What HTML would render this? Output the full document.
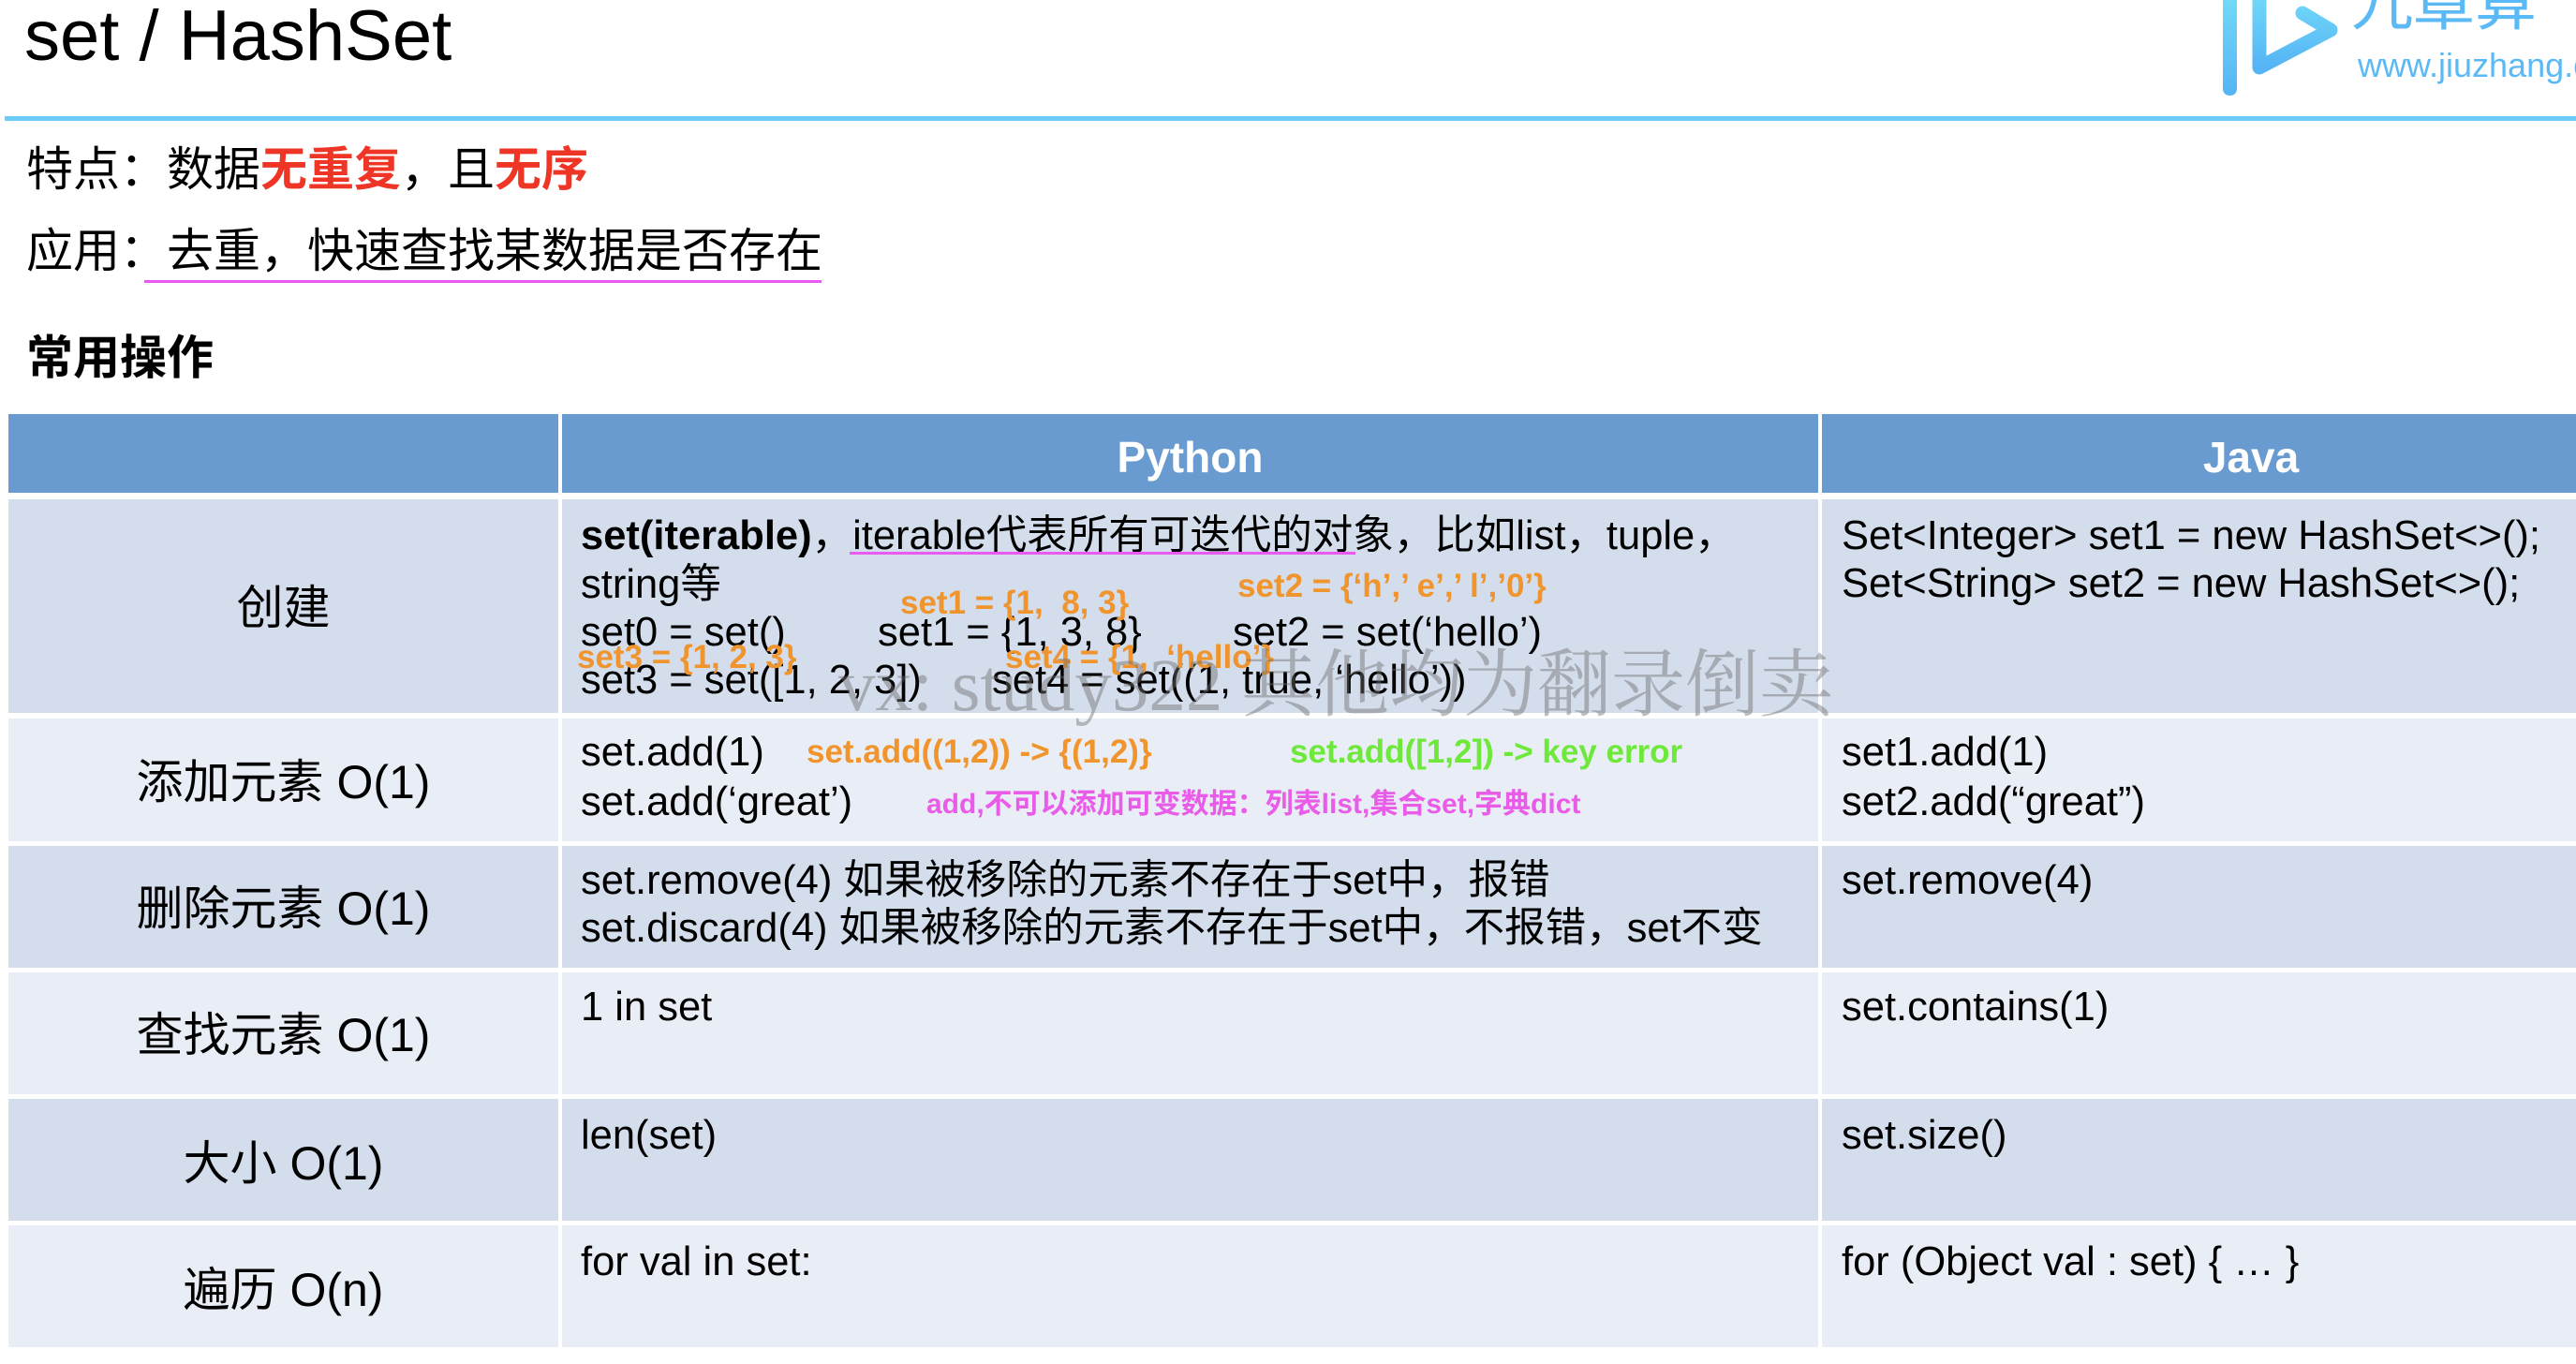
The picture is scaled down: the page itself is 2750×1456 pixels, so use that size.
<!DOCTYPE html>
<html><head><meta charset="utf-8"><style>
*{margin:0;padding:0;box-sizing:border-box}
body{width:2750px;height:1456px;background:#fff;position:relative;overflow:hidden;font-family:"Liberation Sans","Noto Sans CJK SC",sans-serif;color:#000}
.a{position:absolute;white-space:nowrap}
.t{font-size:43.5px;line-height:52px}
.c{position:absolute;}
.lab{font-size:50px;line-height:60px;text-align:center;width:587px;left:9px}
.or{color:#f0952e;font-weight:bold;font-size:35px;line-height:40px}
</style></head><body>
<div class="a" style="left:26px;top:-6px;font-size:76px;line-height:90px">set / HashSet</div>
<!-- logo -->
<svg class="c" style="left:2360px;top:0" width="390" height="110" viewBox="0 0 390 110">
<defs><linearGradient id="g" x1="0" y1="0" x2="0" y2="1"><stop offset="0" stop-color="#74dcf8"/><stop offset="1" stop-color="#55b4f5"/></linearGradient></defs>
<rect x="13" y="-10" width="15" height="112" rx="7" fill="url(#g)"/>
<path d="M52 -10 L52 72 L128 32 L98 14" fill="none" stroke="url(#g)" stroke-width="15" stroke-linejoin="round" stroke-linecap="round"/>
<text x="150" y="26" font-size="66" fill="#5bb9f5" font-family="Noto Sans CJK SC">九章算</text>
<text x="157" y="82" font-size="36" fill="#5bb9f5" font-family="Liberation Sans">www.jiuzhang.com</text>
</svg>
<div class="c" style="left:5px;top:124px;width:2745px;height:5px;background:#6ccbf8"></div>
<div class="a" style="left:28px;top:153px;font-size:50px;line-height:56px">特点：数据<b style="color:#ee3526">无重复</b>，且<b style="color:#ee3526">无序</b></div>
<div class="a" style="left:28px;top:240px;font-size:50px;line-height:56px">应用：去重，快速查找某数据是否存在</div>
<div class="c" style="left:154px;top:299px;width:723px;height:3px;background:#e95bef"></div>
<div class="a" style="left:28px;top:354px;font-size:50px;line-height:56px;font-weight:bold">常用操作</div>
<!-- table -->
<div class="c" style="left:9px;top:442px;width:587px;height:84px;background:#6a9bd0"></div>
<div class="c" style="left:600px;top:442px;width:1341px;height:84px;background:#6a9bd0"></div>
<div class="c" style="left:1945px;top:442px;width:805px;height:84px;background:#6a9bd0"></div>
<div class="a" style="left:600px;width:1341px;text-align:center;top:462px;font-size:46px;line-height:52px;color:#fff;font-weight:bold">Python</div>
<div class="a" style="left:1945px;width:916px;text-align:center;top:462px;font-size:46px;line-height:52px;color:#fff;font-weight:bold">Java</div>
<!-- rows -->
<div class="c" style="left:9px;top:533px;width:587px;height:228px;background:#d3ddec"></div>
<div class="c" style="left:600px;top:533px;width:1341px;height:228px;background:#d3ddec"></div>
<div class="c" style="left:1945px;top:533px;width:805px;height:228px;background:#d3ddec"></div>
<div class="c" style="left:9px;top:767px;width:587px;height:131px;background:#e9eef6"></div>
<div class="c" style="left:600px;top:767px;width:1341px;height:131px;background:#e9eef6"></div>
<div class="c" style="left:1945px;top:767px;width:805px;height:131px;background:#e9eef6"></div>
<div class="c" style="left:9px;top:903px;width:587px;height:130px;background:#d3ddec"></div>
<div class="c" style="left:600px;top:903px;width:1341px;height:130px;background:#d3ddec"></div>
<div class="c" style="left:1945px;top:903px;width:805px;height:130px;background:#d3ddec"></div>
<div class="c" style="left:9px;top:1038px;width:587px;height:130px;background:#e9eef6"></div>
<div class="c" style="left:600px;top:1038px;width:1341px;height:130px;background:#e9eef6"></div>
<div class="c" style="left:1945px;top:1038px;width:805px;height:130px;background:#e9eef6"></div>
<div class="c" style="left:9px;top:1173px;width:587px;height:130px;background:#d3ddec"></div>
<div class="c" style="left:600px;top:1173px;width:1341px;height:130px;background:#d3ddec"></div>
<div class="c" style="left:1945px;top:1173px;width:805px;height:130px;background:#d3ddec"></div>
<div class="c" style="left:9px;top:1308px;width:587px;height:130px;background:#e9eef6"></div>
<div class="c" style="left:600px;top:1308px;width:1341px;height:130px;background:#e9eef6"></div>
<div class="c" style="left:1945px;top:1308px;width:805px;height:130px;background:#e9eef6"></div>
<!-- labels -->
<div class="a lab" style="top:619px">创建</div>
<div class="a lab" style="top:805px">添加元素 O(1)</div>
<div class="a lab" style="top:940px">删除元素 O(1)</div>
<div class="a lab" style="top:1075px">查找元素 O(1)</div>
<div class="a lab" style="top:1212px">大小 O(1)</div>
<div class="a lab" style="top:1347px">遍历 O(n)</div>
<!-- row1 python -->
<div class="a t" style="left:620px;top:546px"><b>set(iterable)</b>，iterable代表所有可迭代的对象，比如list，tuple，</div>
<div class="c" style="left:907px;top:589px;width:540px;height:3px;background:#e95bef"></div>
<div class="a t" style="left:620px;top:598px">string等</div>
<div class="a t" style="left:620px;top:649px">set0 = set()</div>
<div class="a t" style="left:937px;top:649px">set1 = {1, 3, 8}</div>
<div class="a t" style="left:1316px;top:649px">set2 = set(‘hello’)</div>
<div class="a t" style="left:620px;top:700px">set3 = set([1, 2, 3])</div>
<div class="a t" style="left:1059px;top:700px">set4 = set((1, true, ‘hello’))</div>
<div class="a or" style="left:961px;top:624px">set1 = {1,&nbsp; 8, 3}</div>
<div class="a or" style="left:1321px;top:606px">set2 = {‘h’,’ e’,’ l’,’0’}</div>
<div class="a or" style="left:616px;top:682px">set3 = {1, 2, 3}</div>
<div class="a or" style="left:1073px;top:682px">set4 = {1,&nbsp; ‘hello’}</div>
<div class="a" style="left:895px;top:688px;font-size:79px;line-height:90px;font-family:'Liberation Serif','Noto Serif CJK SC',serif;color:rgba(110,110,110,0.45)">vx: study322 其他均为翻录倒卖</div>
<!-- row1 java -->
<div class="a t" style="left:1966px;top:546px">Set&lt;Integer&gt; set1 = new HashSet&lt;&gt;();</div>
<div class="a t" style="left:1966px;top:597px">Set&lt;String&gt; set2 = new HashSet&lt;&gt;();</div>
<!-- row2 -->
<div class="a t" style="left:620px;top:777px">set.add(1)</div>
<div class="a t" style="left:620px;top:830px">set.add(‘great’)</div>
<div class="a or" style="left:861px;top:783px">set.add((1,2)) -&gt; {(1,2)}</div>
<div class="a or" style="left:1377px;top:783px;color:#6ee83a">set.add([1,2]) -&gt; key error</div>
<div class="a" style="left:989px;top:841px;font-size:30px;line-height:36px;font-weight:bold;color:#e85ce8">add,不可以添加可变数据：列表list,集合set,字典dict</div>
<div class="a t" style="left:1966px;top:777px">set1.add(1)</div>
<div class="a t" style="left:1966px;top:830px">set2.add(“great”)</div>
<!-- row3 -->
<div class="a t" style="left:620px;top:914px">set.remove(4) 如果被移除的元素不存在于set中，报错</div>
<div class="a t" style="left:620px;top:965px">set.discard(4) 如果被移除的元素不存在于set中，不报错，set不变</div>
<div class="a t" style="left:1966px;top:914px">set.remove(4)</div>
<!-- row4 -->
<div class="a t" style="left:620px;top:1049px">1 in set</div>
<div class="a t" style="left:1966px;top:1049px">set.contains(1)</div>
<!-- row5 -->
<div class="a t" style="left:620px;top:1186px">len(set)</div>
<div class="a t" style="left:1966px;top:1186px">set.size()</div>
<!-- row6 -->
<div class="a t" style="left:620px;top:1321px">for val in set:</div>
<div class="a t" style="left:1966px;top:1321px">for (Object val : set) { … }</div>
</body></html>
